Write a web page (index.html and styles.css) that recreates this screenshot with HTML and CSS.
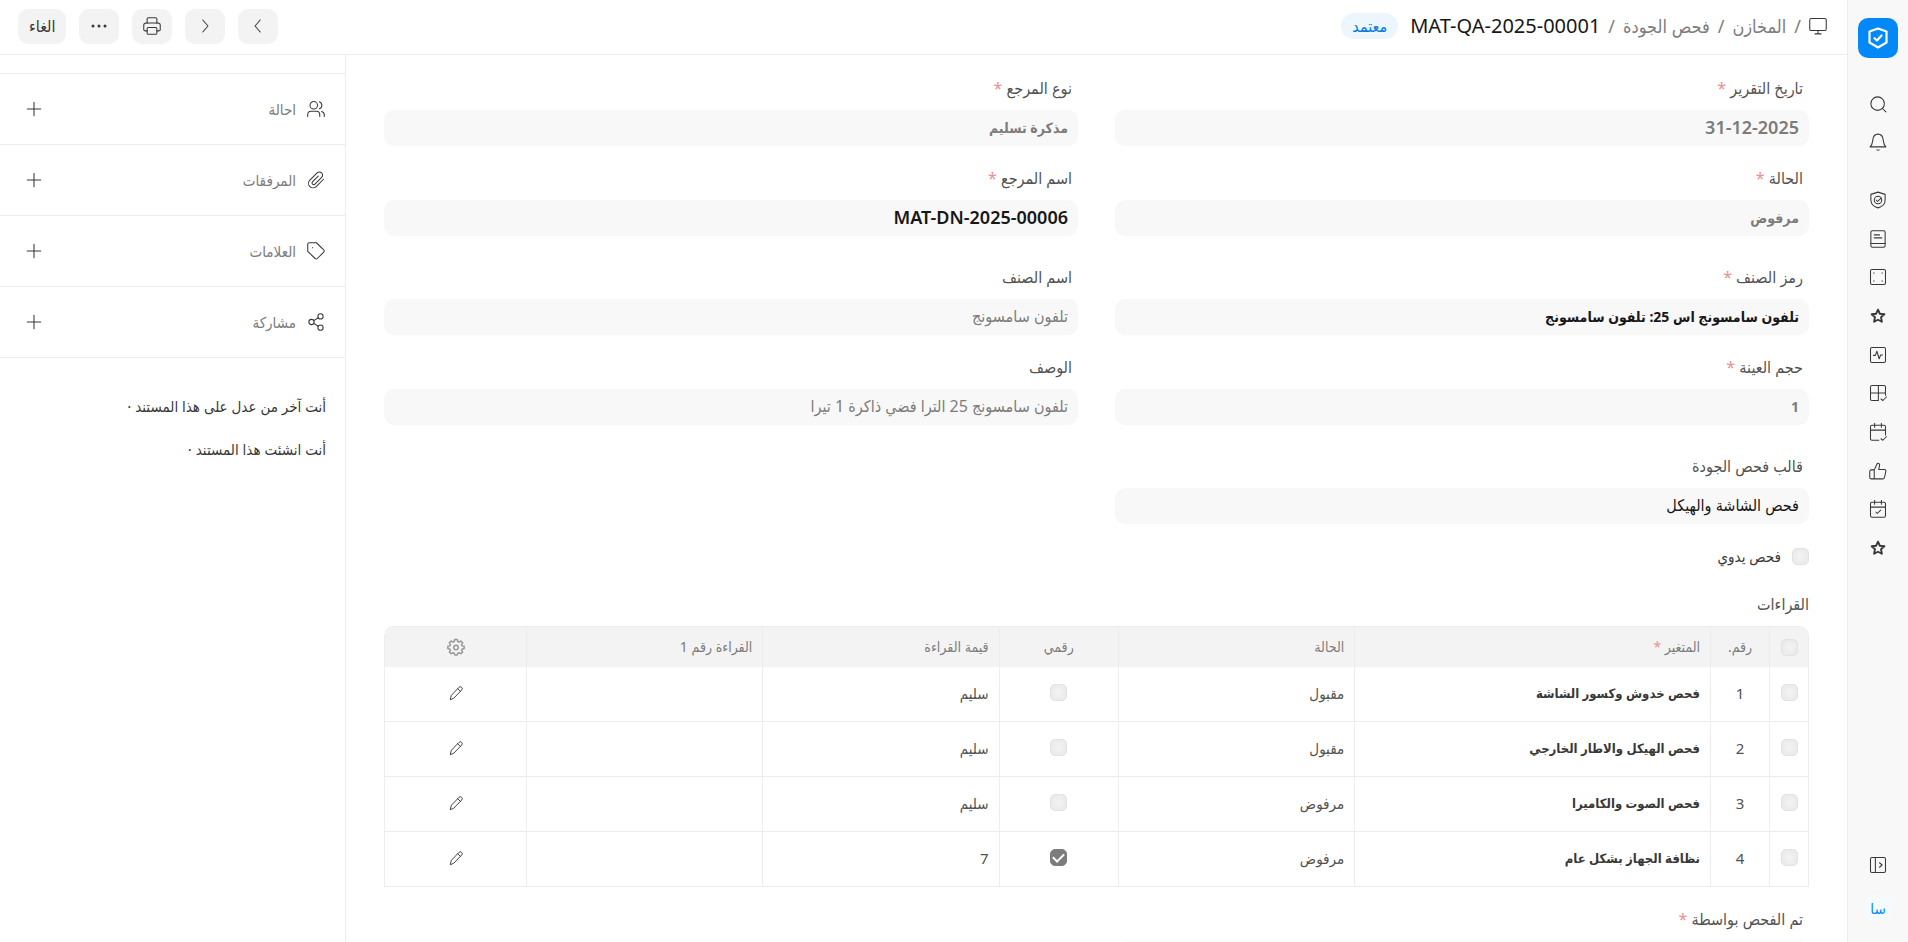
FILE: index.html
```html
<!DOCTYPE html>
<html lang="ar" dir="rtl">
<head>
    <meta charset="utf-8">
    <meta name="viewport" content="width=device-width, initial-scale=1">
    <title>MAT-QA-2025-00001</title>
    <link rel="stylesheet" href="styles.css">
</head>
<body>
<div class="app">

    <nav class="sidebar">
        <a class="logo" href="#" aria-label="الجودة">
            <svg viewBox="0 0 24 24"><path d="M12 2.500 20.500 5.500V16.500L12 21.500 3.500 16.500V5.500Z"/><path d="m8.500 12.200 2.500 2.300 4.500-5"/></svg>
        </a>
        <div class="nav-group nav-top">
            <a href="#" aria-label="بحث"><svg viewBox="0 0 24 24"><circle cx="11.500" cy="11.500" r="9"/><path d="m22.500 22.500-4.500-4.500"/></svg></a>
            <a href="#" aria-label="إشعارات"><svg viewBox="0 0 24 24"><path d="M1.500 18.500C4.500 16 4.500 13 5 9.500 5.500 4.500 8 1.500 12 1.500s6.500 3 7 8c.5 3.500.5 6.500 3.500 9Z"/><path d="M10.500 22.500q1.500 1 3 0"/></svg></a>
        </div>
        <div class="nav-group nav-main">
            <a href="#" aria-label="الجودة"><svg viewBox="0 0 24 24"><path d="M12 1.500 21.500 4.500V12c0 5.500-4 9-9.500 10.500C6.500 21 2.500 17.500 2.500 12V4.500Z"/><circle cx="12" cy="12" r="5"/><path d="m9.500 12 2 2 4.500-4.500"/></svg></a>
            <a href="#" aria-label="السجل"><svg viewBox="0 0 24 24"><rect x="2.500" y="1" width="19" height="22" rx="2"/><path d="M2.500 18h19M7 6.500h7M7 10.500h10"/></svg></a>
            <a href="#" aria-label="القالب"><svg viewBox="0 0 24 24"><rect x="2" y="2" width="20" height="20" rx="2"/><path d="M6.500 6.500v.5M17.500 6.500v.5M6.500 17v.5M17.500 17v.5"/></svg></a>
            <a href="#" aria-label="المفضلة"><svg class="bold" viewBox="0 0 24 24"><path d="m12 3.500 2.500 5.500 6 .7-4.500 4 1.200 6L12 17l-5.200 2.700 1.200-6-4.500-4 6-.7Z"/></svg></a>
            <a href="#" aria-label="النشاط"><svg viewBox="0 0 24 24"><rect x="2" y="2" width="20" height="20" rx="2"/><path d="M6 12.500h2.500l2-5.500 3 10 2-5H18"/></svg></a>
            <a href="#" aria-label="الإجراءات"><svg viewBox="0 0 24 24"><path d="M22 14V4a2 2 0 0 0-2-2H4a2 2 0 0 0-2 2v16a2 2 0 0 0 2 2h8.500V2M2 12h20M22 12v3"/><path d="m16 20 2.500 2 5-5"/></svg></a>
            <a href="#" aria-label="الاجتماعات"><svg viewBox="0 0 24 24"><path d="M22 16V5a2 2 0 0 0-2-2H4a2 2 0 0 0-2 2v16a2 2 0 0 0 2 2h9M2 9.500h20M7.500.500v5M16.500.500v5"/><path d="m16 21 2.500 2 5-5"/></svg></a>
            <a href="#" aria-label="التقييم"><svg viewBox="0 0 24 24"><path d="M7 10.500 11 2c2.500-.8 3.500 1 3 3l-1 5h7.500a2 2 0 0 1 2 2.500l-2 8.500a2 2 0 0 1-2 1.500H3a2 2 0 0 1-2-2v-8a2 2 0 0 1 2-2ZM7 10.500v12"/></svg></a>
            <a href="#" aria-label="المراجعة"><svg viewBox="0 0 24 24"><rect x="2" y="3" width="20" height="20" rx="2"/><path d="M2 9.500h20M7.500.500v5M16.500.500v5M9 16l2 2 4.500-4.500"/></svg></a>
            <a href="#" aria-label="الأهداف"><svg class="bold" viewBox="0 0 24 24"><path d="m12 3.500 2.500 5.500 6 .7-4.500 4 1.200 6L12 17l-5.200 2.700 1.200-6-4.500-4 6-.7Z"/></svg></a>
        </div>
        <div class="nav-bottom">
            <button type="button" aria-label="توسيع"><svg viewBox="0 0 24 24"><rect x="2" y="2" width="20" height="20" rx="2"/><path d="M8.500 2v20M14 9l3.500 3-3.500 3"/></svg></button>
            <a class="avatar" href="#">سا</a>
        </div>
    </nav>

    <div class="page">
        <header class="page-head">
            <div class="crumbs">
                <a class="home" href="#" aria-label="الرئيسية"><svg viewBox="0 0 24 24"><rect x="1" y="2" width="22" height="16" rx="2"/><path d="M12 18v4M8 22.500h8"/></svg></a>
                <span>/</span>
                <a href="#">المخازن</a>
                <span>/</span>
                <a href="#">فحص الجودة</a>
                <span>/</span>
                <h1 dir="ltr">MAT-QA-2025-00001</h1>
                <span class="pill">معتمد</span>
            </div>
            <div class="actions">
                <button type="button" aria-label="السابق"><svg viewBox="0 0 24 24"><path d="m15 4-7 8 7 8"/></svg></button>
                <button type="button" aria-label="التالي"><svg viewBox="0 0 24 24"><path d="m9 4 7 8-7 8"/></svg></button>
                <button type="button" aria-label="طباعة"><svg viewBox="0 0 24 24"><path d="M5.500 8.500V2.500a1.500 1.500 0 0 1 1.500-1.500h10a1.500 1.500 0 0 1 1.500 1.500v6"/><path d="M5.500 18.500H3a2 2 0 0 1-2-2v-5.500a3 3 0 0 1 3-3h16a3 3 0 0 1 3 3v5.500a2 2 0 0 1-2 2h-2.500"/><rect x="5.500" y="14" width="13" height="9" rx="1.500"/></svg></button>
                <button type="button" aria-label="المزيد"><svg class="dots" viewBox="0 0 24 24"><circle cx="4" cy="12" r="2"/><circle cx="12" cy="12" r="2"/><circle cx="20" cy="12" r="2"/></svg></button>
                <button type="button" class="cancel">الغاء</button>
            </div>
        </header>

        <div class="page-body">
            <main class="form">
                <section class="section">
                    <div class="field">
                        <label class="req" for="report_date">تاريخ التقرير</label>
                        <input class="b code" id="report_date" type="text" value="31-12-2025" readonly>
                    </div>
                    <div class="field">
                        <label class="req" for="ref_type">نوع المرجع</label>
                        <input class="b" id="ref_type" type="text" value="مذكرة تسليم" readonly>
                    </div>
                    <div class="field">
                        <label class="req" for="status">الحالة</label>
                        <input class="b" id="status" type="text" value="مرفوض" readonly>
                    </div>
                    <div class="field">
                        <label class="req" for="ref_name">اسم المرجع</label>
                        <input class="b code link" id="ref_name" type="text" value="MAT-DN-2025-00006" readonly>
                    </div>
                </section>

                <section class="section">
                    <div class="field">
                        <label class="req" for="item_code">رمز الصنف</label>
                        <input class="b link" id="item_code" type="text" value="تلفون سامسونج اس 25: تلفون سامسونج" readonly>
                    </div>
                    <div class="field">
                        <label for="item_name">اسم الصنف</label>
                        <input id="item_name" type="text" value="تلفون سامسونج" readonly>
                    </div>
                    <div class="field">
                        <label class="req" for="sample_size">حجم العينة</label>
                        <input class="b" id="sample_size" type="text" value="1" readonly>
                    </div>
                    <div class="field">
                        <label for="description">الوصف</label>
                        <input id="description" type="text" value="تلفون سامسونج 25 الترا فضي ذاكرة 1 تيرا" readonly>
                    </div>
                </section>

                <section class="section one">
                    <div class="field">
                        <label for="template">قالب فحص الجودة</label>
                        <input class="link" id="template" type="text" value="فحص الشاشة والهيكل" readonly>
                    </div>
                    <label class="check"><input type="checkbox">فحص يدوي</label>
                </section>

                <section class="readings">
                    <h2>القراءات</h2>
                    <div class="grid-wrap">
                        <table class="grid">
                            <thead>
                                <tr>
                                    <th class="c-check"><input type="checkbox" aria-label="تحديد الكل"></th>
                                    <th class="c-no">رقم.</th>
                                    <th class="c-name req">المتغير</th>
                                    <th class="c-mid">الحالة</th>
                                    <th class="c-num">رقمي</th>
                                    <th class="c-mid">قيمة القراءة</th>
                                    <th class="c-mid">القراءة رقم 1</th>
                                    <th class="c-edit"><button type="button" aria-label="إعدادات"><svg class="gear" viewBox="0 0 24 24"><path d="M10.300 2h3.400l.6 2.700 1.800.8 2.400-1.500 2.400 2.400L19.400 8.800l.8 1.700 2.700.6v2.900l-2.700.6-.8 1.700 1.500 2.400-2.400 2.400-2.400-1.500-1.800.8-.6 2.100h-3.400l-.6-2.100-1.800-.8-2.400 1.500-2.400-2.400 1.500-2.400-.8-1.700-2.700-.6v-2.900l2.700-.6.800-1.700-1.500-2.400 2.400-2.400L7.900 5.500l1.800-.8Z"/><circle cx="12" cy="12.500" r="3"/></svg></button></th>
                                </tr>
                            </thead>
                            <tbody>
                                <tr>
                                    <td class="c-check"><input type="checkbox" aria-label="1"></td>
                                    <td class="c-no">1</td>
                                    <td class="c-name">فحص خدوش وكسور الشاشة</td>
                                    <td>مقبول</td>
                                    <td class="c-num"><input type="checkbox" aria-label="رقمي"></td>
                                    <td>سليم</td>
                                    <td></td>
                                    <td class="c-edit"><button type="button" aria-label="تعديل"><svg viewBox="0 0 24 24"><path d="M3.500 21.500 5 15.500 16.500 3.500a2.800 2.800 0 0 1 4 4L9 19.500Z"/><path d="m14.500 5.500 4 4"/></svg></button></td>
                                </tr>
                                <tr>
                                    <td class="c-check"><input type="checkbox" aria-label="2"></td>
                                    <td class="c-no">2</td>
                                    <td class="c-name">فحص الهيكل والاطار الخارجي</td>
                                    <td>مقبول</td>
                                    <td class="c-num"><input type="checkbox" aria-label="رقمي"></td>
                                    <td>سليم</td>
                                    <td></td>
                                    <td class="c-edit"><button type="button" aria-label="تعديل"><svg viewBox="0 0 24 24"><path d="M3.500 21.500 5 15.500 16.500 3.500a2.800 2.800 0 0 1 4 4L9 19.500Z"/><path d="m14.500 5.500 4 4"/></svg></button></td>
                                </tr>
                                <tr>
                                    <td class="c-check"><input type="checkbox" aria-label="3"></td>
                                    <td class="c-no">3</td>
                                    <td class="c-name">فحص الصوت والكاميرا</td>
                                    <td>مرفوض</td>
                                    <td class="c-num"><input type="checkbox" aria-label="رقمي"></td>
                                    <td>سليم</td>
                                    <td></td>
                                    <td class="c-edit"><button type="button" aria-label="تعديل"><svg viewBox="0 0 24 24"><path d="M3.500 21.500 5 15.500 16.500 3.500a2.800 2.800 0 0 1 4 4L9 19.500Z"/><path d="m14.500 5.500 4 4"/></svg></button></td>
                                </tr>
                                <tr>
                                    <td class="c-check"><input type="checkbox" aria-label="4"></td>
                                    <td class="c-no">4</td>
                                    <td class="c-name">نظافة الجهاز بشكل عام</td>
                                    <td>مرفوض</td>
                                    <td class="c-num"><input type="checkbox" aria-label="رقمي" checked></td>
                                    <td>7</td>
                                    <td></td>
                                    <td class="c-edit"><button type="button" aria-label="تعديل"><svg viewBox="0 0 24 24"><path d="M3.500 21.500 5 15.500 16.500 3.500a2.800 2.800 0 0 1 4 4L9 19.500Z"/><path d="m14.500 5.500 4 4"/></svg></button></td>
                                </tr>
                            </tbody>
                        </table>
                    </div>
                </section>

                <section class="section last">
                    <div class="field">
                        <label class="req" for="inspected_by">تم الفحص بواسطة</label>
                        <input id="inspected_by" type="text" readonly>
                    </div>
                </section>
            </main>

            <aside class="side">
                <ul class="side-list">
                    <li>
                        <svg viewBox="0 0 24 24"><circle cx="9" cy="7" r="5"/><path d="M1 22v-2.500a4.500 4.500 0 0 1 4.500-4.500h7A4.500 4.500 0 0 1 17 19.500V22M16.500 2.300a5 5 0 0 1 0 9.400M19.500 15.300A4.500 4.500 0 0 1 23 19.500V22"/></svg>
                        <span>احالة</span>
                        <button type="button" aria-label="إضافة احالة"><svg viewBox="0 0 24 24"><path d="M12 3v18M3 12h18"/></svg></button>
                    </li>
                    <li>
                        <svg viewBox="0 0 24 24"><path d="m22 11-9.700 9.700a6 6 0 0 1-8.500-8.500L13.500 2.500a4.200 4.200 0 0 1 6 0 4.200 4.200 0 0 1 0 6L10.300 17.700a2.200 2.200 0 0 1-3.100-3.100L15 6.800"/></svg>
                        <span>المرفقات</span>
                        <button type="button" aria-label="إضافة مرفق"><svg viewBox="0 0 24 24"><path d="M12 3v18M3 12h18"/></svg></button>
                    </li>
                    <li>
                        <svg viewBox="0 0 24 24"><path d="M3 1h9.500L22.300 10.500a2 2 0 0 1 0 3l-8.500 8.500a2 2 0 0 1-3 0L1 12.500V3a2 2 0 0 1 2-2Z"/><path d="M7.500 7.500h.1"/></svg>
                        <span>العلامات</span>
                        <button type="button" aria-label="إضافة علامة"><svg viewBox="0 0 24 24"><path d="M12 3v18M3 12h18"/></svg></button>
                    </li>
                    <li>
                        <svg viewBox="0 0 24 24"><circle cx="18" cy="4.500" r="3.500"/><circle cx="6" cy="12" r="3.500"/><circle cx="18" cy="19.500" r="3.500"/><path d="m9 10.200 6-3.900M9 13.800l6 3.900"/></svg>
                        <span>مشاركة</span>
                        <button type="button" aria-label="إضافة مشاركة"><svg viewBox="0 0 24 24"><path d="M12 3v18M3 12h18"/></svg></button>
                    </li>
                </ul>
                <div class="meta">
                    <p>أنت آخر من عدل على هذا المستند ·</p>
                    <p>أنت انشئت هذا المستند ·</p>
                </div>
            </aside>
        </div>
    </div>

</div>
</body>
</html>
```
FILE: styles.css
```css
* {box-sizing: border-box;}
body {margin: 0;background: #fff;color: #383838;font: 15px/26px "Noto Sans", "DejaVu Sans Condensed", "DejaVu Sans", sans-serif;}
h1, h2, p, ul {margin: 0;padding: 0;font-weight: 400;list-style: none;}
a {color: inherit;text-decoration: none;}
button, input {margin: 0;font: inherit;color: inherit;}
button {display: flex;align-items: center;justify-content: center;padding: 0;border: 0;background: none;cursor: pointer;}
svg {display: block;width: 18px;height: 18px;fill: none;stroke: #383838;stroke-width: 1.4;stroke-linecap: round;stroke-linejoin: round;}

.app {display: flex;height: 100vh;overflow: hidden;}

/* icon bar */
.sidebar {flex: none;width: 61px;display: flex;flex-direction: column;align-items: center;padding: 18px 0 20px 0;background: #f8f8f8;border-left: 1px solid #ededed;}
.logo {display: flex;align-items: center;justify-content: center;width: 40px;height: 40px;border-radius: 10px;background: #0289f7;}
.logo svg {width: 24px;height: 24px;stroke: #fff;stroke-width: 2.2;}
.nav-group {display: flex;flex-direction: column;}
.nav-group a {display: flex;align-items: center;height: 38px;}
.nav-top {margin: 27px 0 20px;}
.nav-main {height: 386px;justify-content: space-between;}
.sidebar svg.bold {stroke-width: 2.5;}
.nav-bottom {display: flex;flex-direction: column;align-items: center;gap: 20px;margin-top: auto;}
.avatar {width: 28px;height: 28px;border-radius: 50%;background: #f5faff;color: #0289f7;line-height: 28px;text-align: center;}

/* header */
.page {flex: 1;min-width: 0;display: flex;flex-direction: column;}
.page-head {flex: none;height: 55px;display: flex;align-items: center;justify-content: space-between;padding: 0 20px 2px 18px;border-bottom: 1px solid #ededed;}
.crumbs {display: flex;align-items: center;gap: 8px;color: #7c7c7c;font-size: 18px;}
.crumbs h1 {color: #171717;font-size: 20px;}
.pill {margin-right: 4px;padding: 0 11px;border-radius: 13px;background: #edf6fd;color: #007be0;font-size: 16px;}
.actions {display: flex;gap: 13px;}
.actions button {width: 40px;height: 35px;border-radius: 10px;background: #f3f3f3;}
.actions .cancel {width: auto;padding: 0 11px;font-size: 16px;}
.actions svg.dots {fill: #383838;stroke: none;}

.page-body {flex: 1;min-height: 0;display: flex;}

/* form */
.form {flex: 1;min-width: 0;overflow: auto;scrollbar-width: none;padding: 20px 38px;}
.section {display: grid;grid-template-columns: 1fr 1fr;gap: 19px 37px;margin-bottom: 28px;}
.section.one {margin-bottom: 22px;}
.section.one > * {grid-column: 1;}
.section.last {margin: 19px 0 0;}
.field label {display: block;margin-bottom: 9px;padding: 0 6px;color: #525252;font-size: 16px;}
.req::after {content: " *";color: #eb9091;}
.field input {display: block;width: 100%;height: 36px;padding: 0 10px 2px;border: 0;border-radius: 10px;outline: 0;background: #f8f8f8;color: #7c7c7c;font-size: 16px;}
.field input.b {font-size: 14px;font-weight: 700;}
.field input.code {font-size: 18px;font-weight: 600;}
.field input.link {color: #171717;}
.check {display: flex;align-items: center;gap: 11px;}

input[type=checkbox] {appearance: none;display: block;flex: none;width: 17px;height: 17px;border: 1px solid #e2e2e2;border-radius: 5px;background: radial-gradient(#f3f3f3, #e8e8e8);}
input[type=checkbox]:checked {border-color: #7c7c7c;background: #7c7c7c;}
input[type=checkbox]:checked::before {content: "";display: block;width: 5px;height: 9px;margin: 1px auto 0;border: solid #fff;border-width: 0 2px 2px 0;transform: rotate(45deg);}

/* readings table */
.readings h2 {margin-bottom: 9px;color: #525252;font-size: 16px;}
.grid-wrap {overflow: hidden;border: 1px solid #ededed;border-bottom: 0;border-radius: 10px 10px 0 0;}
.grid {width: 100%;table-layout: fixed;border-collapse: separate;border-spacing: 0;}
.grid th, .grid td {padding: 0 10px;border-left: 1px solid #ededed;text-align: right;}
.grid th {height: 40px;background: #f3f3f3;color: #7c7c7c;font-size: 14px;font-weight: 400;}
.grid td {height: 55px;padding-bottom: 3px;border-bottom: 1px solid #ededed;color: #525252;}
.grid th:last-child, .grid td:last-child {border-left: 0;}
.grid .c-check {width: 39px;}
.grid .c-no {width: 59px;text-align: center;}
.grid .c-name {width: 25%;}
.grid td.c-name {color: #383838;font-size: 13px;font-weight: 700;}
.grid .c-mid {width: 16.6%;}
.grid .c-num {width: 8.4%;text-align: center;}
.grid .c-check input, .grid .c-num input, .grid button {margin: 0 auto;}
.grid svg {width: 16px;height: 16px;}
.grid svg.gear {width: 18px;height: 18px;stroke: #999;stroke-width: 2;}

/* document side panel */
.side {order: 1;flex: none;width: 346px;padding-top: 18px;border-right: 1px solid #ededed;}
.side-list {border-top: 1px solid #ededed;}
.side-list li {display: flex;align-items: center;gap: 11px;height: 71px;padding: 0 20px 0 25px;border-bottom: 1px solid #ededed;color: #7c7c7c;}
.side-list button {margin-right: auto;}
.meta {display: flex;flex-direction: column;gap: 17px;padding: 35px 19px;}
```
